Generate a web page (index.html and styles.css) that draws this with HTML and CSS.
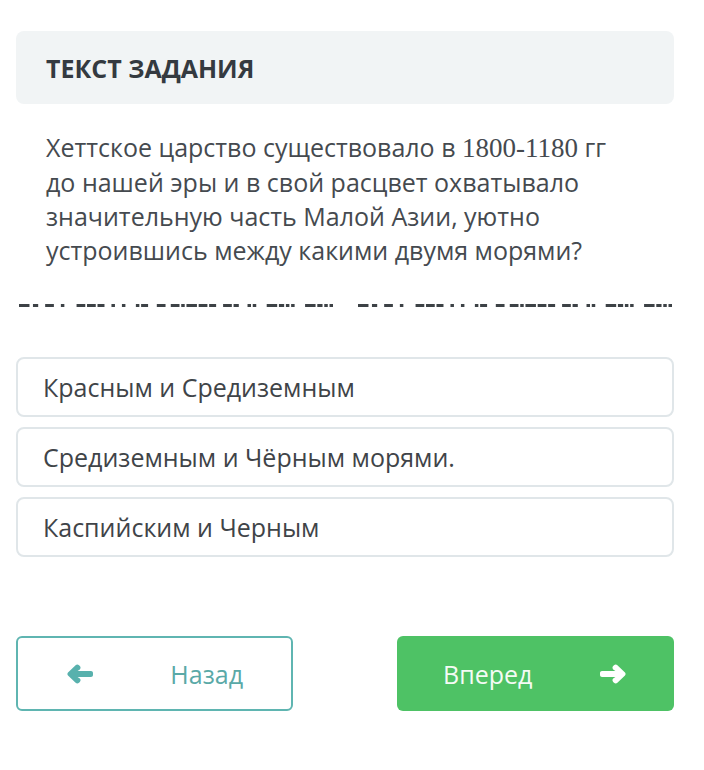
FILE: index.html
```html
<!DOCTYPE html>
<html lang="ru">
<head>
    <meta charset="UTF-8">
    <meta name="viewport" content="width=device-width, initial-scale=1.0">
    <title>Текст задания</title>
    <link rel="stylesheet" href="styles.css">
</head>
<body>
    <div class="page">
        <div class="task-header">
            <h2>ТЕКСТ ЗАДАНИЯ</h2>
        </div>

        <p class="question">
            Хеттское царство существовало в <span class="num">1800-1180</span> гг<br>
            до нашей эры и в свой расцвет охватывало<br>
            значительную часть Малой Азии, уютно<br>
            устроившись между какими двумя морями?
        </p>

        <!-- blank line under the question -->
        <div class="blank">
            <svg class="blank-part" viewBox="0 0 180 3" preserveAspectRatio="none">
                <line x1="0" y1="1.5" x2="180" y2="1.5" stroke="#3d4246" stroke-width="3"
                      stroke-dasharray="6 2 3 4 5 4 2 7 5 1 5 1 4 4 2 4 2 6 2 1 4 5 5 3 5 1 2 1 6 1 5 1 4 4 5 1 3 5 2 1 2 6 6 1 3 1 2 1 2 6 6 1 3 1 2 1 2 0"/>
            </svg>
            <svg class="blank-part" viewBox="0 0 180 3" preserveAspectRatio="none">
                <line x1="0" y1="1.5" x2="180" y2="1.5" stroke="#3d4246" stroke-width="3"
                      stroke-dasharray="6 2 3 4 5 4 2 7 5 1 5 1 4 4 2 4 2 6 2 1 4 5 5 3 5 1 2 1 6 1 5 1 4 4 5 1 3 5 2 1 2 6 6 1 3 1 2 1 2 6 6 1 3 1 2 1 2 0"/>
            </svg>
        </div>

        <div class="answers">
            <div class="answer">Красным и Средиземным</div>
            <div class="answer">Средиземным и Чёрным морями.</div>
            <div class="answer">Каспийским и Черным</div>
        </div>

        <div class="nav">
            <button class="nav-btn back">
                <svg class="arrow" viewBox="0 0 26 20">
                    <path d="M1 8.6L8.6 1.2C9.6 0.3 11 0.3 12 1.2L12.8 2C13.8 3 13.8 4.4 12.8 5.4L10.6 7H24C25.1 7 26 7.9 26 9V11C26 12.1 25.1 13 24 13H10.6L12.8 14.6C13.8 15.6 13.8 17 12.8 18L12 18.8C11 19.7 9.6 19.7 8.6 18.8L1 11.4C0.2 10.6 0.2 9.4 1 8.6Z"/>
                </svg>
                <span>Назад</span>
            </button>
            <button class="nav-btn next">
                <span>Вперед</span>
                <svg class="arrow flip" viewBox="0 0 26 20">
                    <path d="M1 8.6L8.6 1.2C9.6 0.3 11 0.3 12 1.2L12.8 2C13.8 3 13.8 4.4 12.8 5.4L10.6 7H24C25.1 7 26 7.9 26 9V11C26 12.1 25.1 13 24 13H10.6L12.8 14.6C13.8 15.6 13.8 17 12.8 18L12 18.8C11 19.7 9.6 19.7 8.6 18.8L1 11.4C0.2 10.6 0.2 9.4 1 8.6Z"/>
                </svg>
            </button>
        </div>
    </div>
</body>
</html>
```

FILE: styles.css
```css
body {
    margin: 0;
    background: #fff;
    font-family: "Open Sans", "Noto Sans", sans-serif;
    color: #454a4f;
}

.page {
    width: 658px;
    padding: 31px 30px 40px 16px;
}

.task-header {
    background: #f1f4f5;
    border-radius: 8px;
    height: 73px;
    display: flex;
    align-items: center;
    padding-left: 30px;
}

.task-header h2 {
    margin: 0;
    font-size: 25px;
    font-weight: 700;
    color: #343a40;
}

.question {
    margin: 26px 0 0 30px;
    font-size: 25px;
    line-height: 34px;
    color: #454a4f;
}

.question .num {
    font-family: "Liberation Serif", serif;
    font-size: 27px;
}

.blank {
    display: flex;
    justify-content: space-between;
    margin: 37px 2px 0 3px;
    height: 3px;
}

.blank-part {
    display: block;
    width: 314px;
    height: 3px;
}

.answers {
    margin-top: 50px;
    display: flex;
    flex-direction: column;
    gap: 10px;
}

.answer {
    box-sizing: border-box;
    height: 60px;
    border: 2px solid #e0e6e9;
    border-radius: 8px;
    padding-left: 25px;
    display: flex;
    align-items: center;
    font-size: 25px;
    color: #3f4448;
}

.nav {
    margin-top: 79px;
    display: flex;
    justify-content: space-between;
}

.nav-btn {
    box-sizing: border-box;
    width: 277px;
    height: 75px;
    border-radius: 6px;
    display: flex;
    align-items: center;
    justify-content: space-between;
    font-family: "Open Sans", "Noto Sans", sans-serif;
    font-size: 25px;
    cursor: pointer;
}

.nav-btn .arrow {
    display: block;
    width: 26px;
    height: 20px;
}

.arrow.flip {
    transform: scaleX(-1);
}

.back {
    background: #fff;
    border: 2px solid #5fb5b1;
    color: #5aa9a7;
    padding: 0 48px 0 49px;
}

.back .arrow {
    fill: #58b1ad;
}

.next {
    background: #4ec265;
    border: none;
    color: #f4fbf5;
    padding: 0 48px 0 46px;
}

.next .arrow {
    fill: #fff;
}
```
